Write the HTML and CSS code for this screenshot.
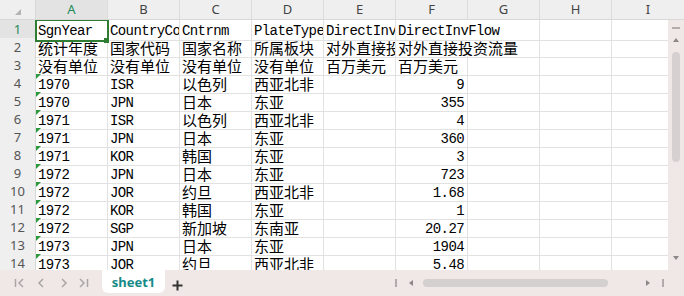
FILE: index.html
```html
<!DOCTYPE html>
<html lang="zh-CN">
<head>
    <meta charset="UTF-8">
    <title>sheet1</title>
    <link rel="stylesheet" href="styles.css">
</head>
<body>
    <div class="sheet">
        <div class="col-head">
            <div class="corner"><span class="corner-tri"></span></div>
            <div class="head-cell sel">A</div>
            <div class="head-cell">B</div>
            <div class="head-cell">C</div>
            <div class="head-cell">D</div>
            <div class="head-cell">E</div>
            <div class="head-cell">F</div>
            <div class="head-cell">G</div>
            <div class="head-cell">H</div>
            <div class="head-cell last">I</div>
        </div>
        <div class="body">
            <div class="rows" id="rows"></div>
            <div class="vscroll">
                <span class="dash"></span>
                <span class="arrow-up"></span>
                <span class="vthumb"></span>
                <span class="arrow-down"></span>
            </div>
        </div>
        <div class="tabbar">
            <svg class="nav" width="102" height="26" viewBox="0 0 102 26">
                <g fill="none" stroke="#a9a6a5" stroke-width="1.5">
                    <line x1="15.5" y1="9" x2="15.5" y2="17"/>
                    <polyline points="23,9 19,13 23,17"/>
                    <polyline points="43,9 39,13 43,17"/>
                    <polyline points="62,9 66,13 62,17"/>
                    <polyline points="80,9 84,13 80,17"/>
                    <line x1="87.5" y1="9" x2="87.5" y2="17"/>
                </g>
            </svg>
            <div class="tab">sheet1</div>
            <svg class="plus" width="11" height="11" viewBox="0 0 11 11">
                <path d="M5.5 0.5v10M0.5 5.5h10" stroke="#333" stroke-width="2"/>
            </svg>
            <div class="hbar">
                <span class="sep"></span>
                <span class="arrow-left"></span>
                <span class="hthumb"></span>
                <span class="arrow-right"></span>
                <span class="sep end"></span>
            </div>
        </div>
    </div>

    <script>
        const data = [
            ["SgnYear", "CountryCode", "Cntrnm", "PlateType", "DirectInvStock", "DirectInvFlow"],
            ["统计年度", "国家代码", "国家名称", "所属板块", "对外直接投资存量", "对外直接投资流量"],
            ["没有单位", "没有单位", "没有单位", "没有单位", "百万美元", "百万美元"],
            ["1970", "ISR", "以色列", "西亚北非", "", "9"],
            ["1970", "JPN", "日本", "东亚", "", "355"],
            ["1971", "ISR", "以色列", "西亚北非", "", "4"],
            ["1971", "JPN", "日本", "东亚", "", "360"],
            ["1971", "KOR", "韩国", "东亚", "", "3"],
            ["1972", "JPN", "日本", "东亚", "", "723"],
            ["1972", "JOR", "约旦", "西亚北非", "", "1.68"],
            ["1972", "KOR", "韩国", "东亚", "", "1"],
            ["1972", "SGP", "新加坡", "东南亚", "", "20.27"],
            ["1973", "JPN", "日本", "东亚", "", "1904"],
            ["1973", "JOR", "约旦", "西亚北非", "", "5.48"]
        ];

        const rowsEl = document.getElementById("rows");
        data.forEach((r, i) => {
            const row = document.createElement("div");
            row.className = "row";
            let html = `<div class="num${i === 0 ? " sel" : ""}">${i + 1}</div>`;
            for (let c = 0; c < 9; c++) {
                const v = r[c] || "";
                let cls = "cell";
                if (/[^\x00-\x7f]/.test(v)) cls += " zh";
                if (i >= 3 && c === 0) cls += " flag"; // number stored as text
                if (i >= 3 && c === 5) cls += " num-val";
                if (i < 2 && c === 5) cls += " spill";
                if (i === 0 && c === 0) cls += " active";
                const handle = (i === 0 && c === 0) ? '<span class="handle"></span>' : "";
                html += `<div class="${cls}">${v}${handle}</div>`;
            }
            row.innerHTML = html;
            rowsEl.appendChild(row);
        });
    </script>
</body>
</html>
```

FILE: styles.css
```css
* {
    box-sizing: border-box;
}
body {
    margin: 0;
    background: #fff;
    font-family: "Noto Sans", sans-serif;
    overflow: hidden;
}
.sheet {
    width: 684px;
    height: 296px;
    display: flex;
    flex-direction: column;
}

/* Column letters */
.col-head {
    flex: none;
    display: grid;
    grid-template-columns: 36px repeat(9, 72px);
    height: 20px;
    background: #efefef;
    border-bottom: 1px solid #d8d8d8;
}
.corner {
    position: relative;
    border-right: 1px solid #d8d8d8;
}
.corner-tri {
    position: absolute;
    left: 15px;
    top: 9px;
    width: 0;
    height: 0;
    border-left: 6px solid transparent;
    border-bottom: 6px solid #b4b4b4;
}
.head-cell {
    border-right: 1px solid #dcdcdc;
    text-align: center;
    font-size: 13px;
    line-height: 19px;
    color: #444;
}
.head-cell.last {
    border-right: none;
}
.head-cell.sel {
    background: #e3e3e3;
    color: #1e8a5a;
}

/* Grid body */
.body {
    flex: 1;
    min-height: 0;
    display: flex;
}
.rows {
    flex: 1;
    overflow: hidden;
}
.row {
    display: grid;
    grid-template-columns: 36px repeat(9, 72px);
    height: 18px;
}
.num {
    background: #efefef;
    border-right: 1px solid #d8d8d8;
    border-bottom: 1px solid #e0e0e0;
    text-align: center;
    font-size: 13px;
    line-height: 19px;
    color: #555;
}
.num.sel {
    background: #e3e3e3;
    color: #1e8a5a;
}
.cell {
    position: relative;
    border-right: 1px solid #e2e2e2;
    border-bottom: 1px solid #e2e2e2;
    padding: 3px 2px 0;
    font-family: "Liberation Mono", monospace;
    font-size: 14px;
    letter-spacing: -0.6px;
    line-height: 17px;
    color: #000;
    white-space: nowrap;
    overflow: hidden;
}
.cell.zh {
    padding-top: 1px;
    font-family: "Noto Sans CJK SC", sans-serif;
    font-size: 15px;
    letter-spacing: 0;
    line-height: 18px;
}
.cell.num-val {
    text-align: right;
    padding-right: 3px;
}
.cell.spill {
    overflow: visible;
    border-right-color: transparent;
}
.cell.flag::before {
    content: "";
    position: absolute;
    left: 0;
    top: 0;
    border-top: 5px solid #2a9a3c;
    border-right: 5px solid transparent;
}
.cell.active {
    outline: 2px solid #2f7d32;
    outline-offset: -1px;
    overflow: visible;
    z-index: 2;
}
.handle {
    position: absolute;
    right: -2px;
    bottom: -3px;
    width: 5px;
    height: 5px;
    background: #2f7d32;
}

/* Vertical scrollbar */
.vscroll {
    flex: none;
    width: 16px;
    background: #efe8e7;
    display: flex;
    flex-direction: column;
    align-items: center;
    padding-top: 7px;
}
.dash {
    width: 8px;
    height: 2px;
    background: #b3aeac;
}
.arrow-up {
    margin-top: 9px;
    border-left: 3px solid transparent;
    border-right: 3px solid transparent;
    border-bottom: 4px solid #8c8887;
}
.vthumb {
    margin-top: 10px;
    width: 8px;
    height: 110px;
    border-radius: 4px;
    background: #d6d1d0;
}
.arrow-down {
    margin-top: auto;
    margin-bottom: 10px;
    border-left: 3px solid transparent;
    border-right: 3px solid transparent;
    border-top: 4px solid #8c8887;
}

/* Sheet tabs and horizontal scrollbar */
.tabbar {
    flex: none;
    height: 26px;
    background: #efe8e6;
    display: flex;
    align-items: flex-start;
}
.nav {
    flex: none;
}
.tab {
    width: 63px;
    height: 23px;
    background: #fff;
    border-radius: 0 0 6px 6px;
    text-align: center;
    font-size: 13px;
    font-weight: bold;
    line-height: 25px;
    color: #168a88;
}
.plus {
    margin: 10px 0 0 7px;
}
.hbar {
    margin-left: auto;
    width: 294px;
    height: 26px;
    display: flex;
    align-items: center;
}
.sep {
    margin-left: 5px;
    width: 2px;
    height: 8px;
    background: #b1acab;
}
.sep.end {
    margin-left: 12px;
}
.arrow-left {
    margin-left: 12px;
    border-top: 3px solid transparent;
    border-bottom: 3px solid transparent;
    border-right: 4px solid #8c8887;
}
.hthumb {
    margin-left: 10px;
    width: 185px;
    height: 8px;
    border-radius: 4px;
    background: #d4d0cf;
}
.arrow-right {
    margin-left: 38px;
    border-top: 3px solid transparent;
    border-bottom: 3px solid transparent;
    border-left: 4px solid #8c8887;
}
```
